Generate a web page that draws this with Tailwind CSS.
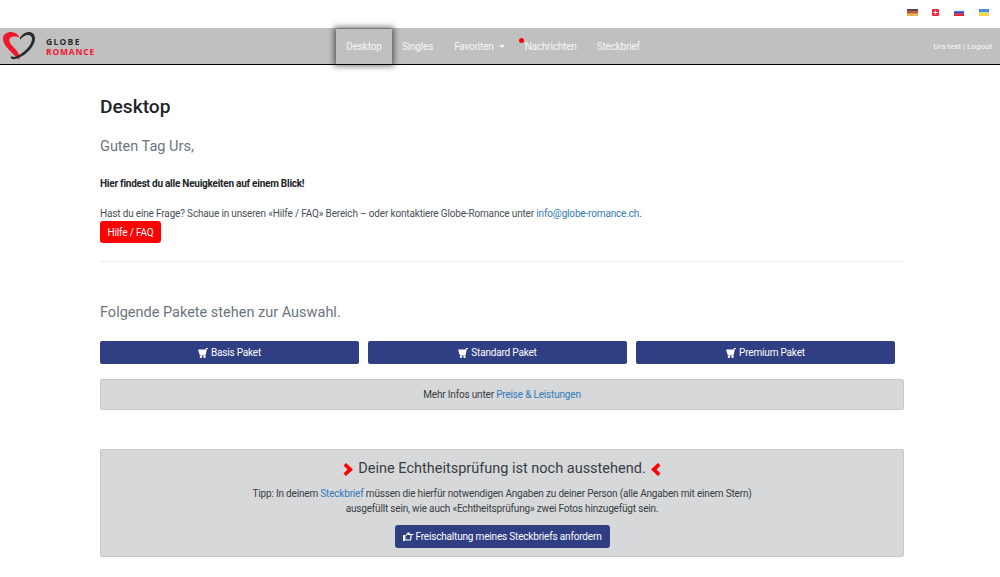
<!DOCTYPE html>
<html lang="de">
<head>
    <meta charset="UTF-8">
    <title>Desktop</title>
    <script src="https://cdn.jsdelivr.net/npm/@tailwindcss/browser@4"></script>
</head>
<body class="bg-white font-['Roboto',sans-serif] text-[10px] tracking-[-0.18px] text-[#212529] h-[577px] overflow-hidden">
    <!-- Flags -->
    <div class="h-[28px] flex justify-end items-start gap-[15px] pt-[9px] pr-[11px]">
        <svg width="11" height="7" viewBox="0 0 11 7" class="-mr-[1px]"><rect width="11" height="2.4" fill="#5a4a3a"/><rect y="2.3" width="11" height="2.4" fill="#c8433a"/><rect y="4.6" width="11" height="2.4" fill="#e0b84a"/></svg>
        <svg width="7" height="7" viewBox="0 0 7 7"><rect width="7" height="7" rx="1" fill="#f0283a"/><path d="M3 1.500h1V3h1.500v1H4v1.500H3V4H1.500V3H3z" fill="#fff"/></svg>
        <svg width="10" height="7" viewBox="0 0 10 7"><rect width="10" height="2.4" fill="#f0f0f5"/><rect y="2.3" width="10" height="2.4" fill="#2a3fc8"/><rect y="4.6" width="10" height="2.4" fill="#e8283a"/></svg>
        <svg width="10" height="7" viewBox="0 0 10 7"><rect width="10" height="3.500" fill="#4a90d8"/><rect y="3.500" width="10" height="3.500" fill="#f5d94a"/></svg>
    </div>

    <!-- Navbar -->
    <nav class="relative h-[37px] bg-[#c0c0c0] border-b border-black flex items-center">
        <div class="flex items-center absolute left-[3px] top-[3px]">
            <svg width="33" height="30" viewBox="0 0 33 30" fill="none">
                <path d="M16 29 C10 22 0 15 0 8 C0 3 4 1 8 1 C12 1 15 3 17 7 C13 5 8 5 6.500 8 C5 12 11 16 14 20 C16 23 17 26 16 29Z" fill="#f0162c"/>
                <path d="M17 7 C19 3 23 1 26 1 C30 1 32 4 32 8 C32 15 22 26 12 28 C9 29 7 27 8 25 C9 26 11 26 13 25.500 C21 22 29 14 29 8 C29 5 27 4 25 4 C22 4 19 6 17 9Z" fill="#2b2b2b"/>
            </svg>
            <div class="ml-[10px] mt-[1px] font-['Open_Sans',sans-serif] font-bold text-[8.5px] leading-[10px]">
                <div class="text-[#2b2b2b] tracking-[1.3px]">GLOBE</div>
                <div class="text-[#f0162c] tracking-[0.8px]">ROMANCE</div>
            </div>
        </div>
        <div class="flex h-full items-center ml-[336px] text-white/85">
            <a class="h-[35px] w-[56px] flex items-center justify-center bg-[#c0c0c0] shadow-[0_0_6px_2px_rgba(0,0,0,0.55)] relative">Desktop</a>
            <a class="ml-[10px]">Singles</a>
            <a class="ml-[21px] flex items-center">Favoriten<span class="ml-[5px] mt-[1px] border-x-[3px] border-x-transparent border-t-[3px] border-t-white/85"></span></a>
            <a class="ml-[20px] relative">Nachrichten<span class="absolute -left-[6px] -top-[1px] w-[5px] h-[5px] rounded-full bg-[#ff0000]"></span></a>
            <a class="ml-[20px]">Steckbrief</a>
        </div>
        <div class="absolute right-[8px] top-[14px] text-[8px] tracking-normal leading-[10px] text-white/90">Urs test | Logout</div>
    </nav>

    <!-- Content -->
    <main class="w-[804px] ml-[100px]">
        <h1 class="mt-[31px] text-[19.2px] tracking-normal leading-[22px] font-medium">Desktop</h1>
        <h2 class="mt-[20px] text-[14.5px] tracking-normal leading-[18px] text-[#6c757d]">Guten Tag Urs,</h2>
        <p class="mt-[21px] leading-[14px] font-bold tracking-[-0.24px]">Hier findest du alle Neuigkeiten auf einem Blick!</p>
        <p class="mt-[16px] leading-[14px] tracking-[-0.16px] text-[#495057]">Hast du eine Frage? Schaue in unseren «Hilfe / FAQ» Bereich – oder kontaktiere Globe-Romance unter <a class="text-[#337ab7]">info@globe-romance.ch</a>.</p>
        <a class="w-[61px] h-[22px] flex items-center justify-center rounded-[3px] bg-[#ff0000] text-white">Hilfe / FAQ</a>
        <hr class="mt-[18px] border-[#eeeeee]">

        <h2 class="mt-[42px] text-[14.5px] tracking-normal leading-[18px] text-[#6c757d]">Folgende Pakete stehen zur Auswahl.</h2>
        <div class="mt-[19px] flex gap-[9px] w-[795px]">
            <a class="flex-1 h-[23px] flex items-center justify-center gap-[3px] rounded-[2px] bg-[#303e84] text-white">
                <svg width="10" height="10" viewBox="0 0 10 10" fill="#fff"><path d="M0 1.500h7.500L8 0h2v1H8.800L7.600 7.500H2L1.200 5.500z"/><circle cx="3" cy="8.800" r="1.200"/><circle cx="6.500" cy="8.800" r="1.200"/></svg>Basis Paket</a>
            <a class="flex-1 h-[23px] flex items-center justify-center gap-[3px] rounded-[2px] bg-[#303e84] text-white">
                <svg width="10" height="10" viewBox="0 0 10 10" fill="#fff"><path d="M0 1.500h7.500L8 0h2v1H8.800L7.600 7.500H2L1.200 5.500z"/><circle cx="3" cy="8.800" r="1.200"/><circle cx="6.500" cy="8.800" r="1.200"/></svg>Standard Paket</a>
            <a class="flex-1 h-[23px] flex items-center justify-center gap-[3px] rounded-[2px] bg-[#303e84] text-white">
                <svg width="10" height="10" viewBox="0 0 10 10" fill="#fff"><path d="M0 1.500h7.500L8 0h2v1H8.800L7.600 7.500H2L1.200 5.500z"/><circle cx="3" cy="8.800" r="1.200"/><circle cx="6.500" cy="8.800" r="1.200"/></svg>Premium Paket</a>
        </div>
        <div class="mt-[15px] h-[31px] flex items-center justify-center rounded-[2px] bg-[#d6d8da] border border-[#c6c8ca] text-[#383d41]">
            <span>Mehr Infos unter <a class="text-[#337ab7]">Preise &amp; Leistungen</a></span>
        </div>

        <section class="mt-[39px] h-[108px] rounded-[2px] bg-[#d6d8da] border border-[#c6c8ca] text-[#383d41] flex flex-col items-center">
            <div class="mt-[9px] flex items-center text-[14.5px] tracking-normal leading-[20px]">
                <svg width="10" height="13" viewBox="0 0 10 13" class="mr-[5px]" fill="#ff0000"><path d="M3 0L10 6.500 3 13 .5 10.500 4.500 6.500 .5 2.500z"/></svg>
                Deine Echtheitsprüfung ist noch ausstehend.
                <svg width="10" height="13" viewBox="0 0 10 13" class="ml-[5px]" fill="#ff0000"><path d="M7 0L0 6.500 7 13 9.500 10.500 5.500 6.500 9.500 2.500z"/></svg>
            </div>
            <p class="mt-[7px] text-center leading-[15px]">Tipp: In deinem <a class="text-[#337ab7]">Steckbrief</a> müssen die hierfür notwendigen Angaben zu deiner Person (alle Angaben mit einem Stern)<br>ausgefüllt sein, wie auch «Echtheitsprüfung» zwei Fotos hinzugefügt sein.</p>
            <a class="mt-[9px] h-[23px] w-[215px] flex items-center justify-center gap-[2px] whitespace-nowrap rounded-[3px] bg-[#303e84] text-white">
                <svg width="11" height="9" viewBox="0 0 11 9" fill="none" stroke="#fff" stroke-width="1.200"><path d="M0.600 3.500h1.200v5H0.600zM3 3.500L5 1h1L5.500 2.500H10.500M8 2.500v2.500L7.500 8H3.500L3 7"/></svg>Freischaltung meines Steckbriefs anfordern</a>
        </section>
    </main>
</body>
</html>
